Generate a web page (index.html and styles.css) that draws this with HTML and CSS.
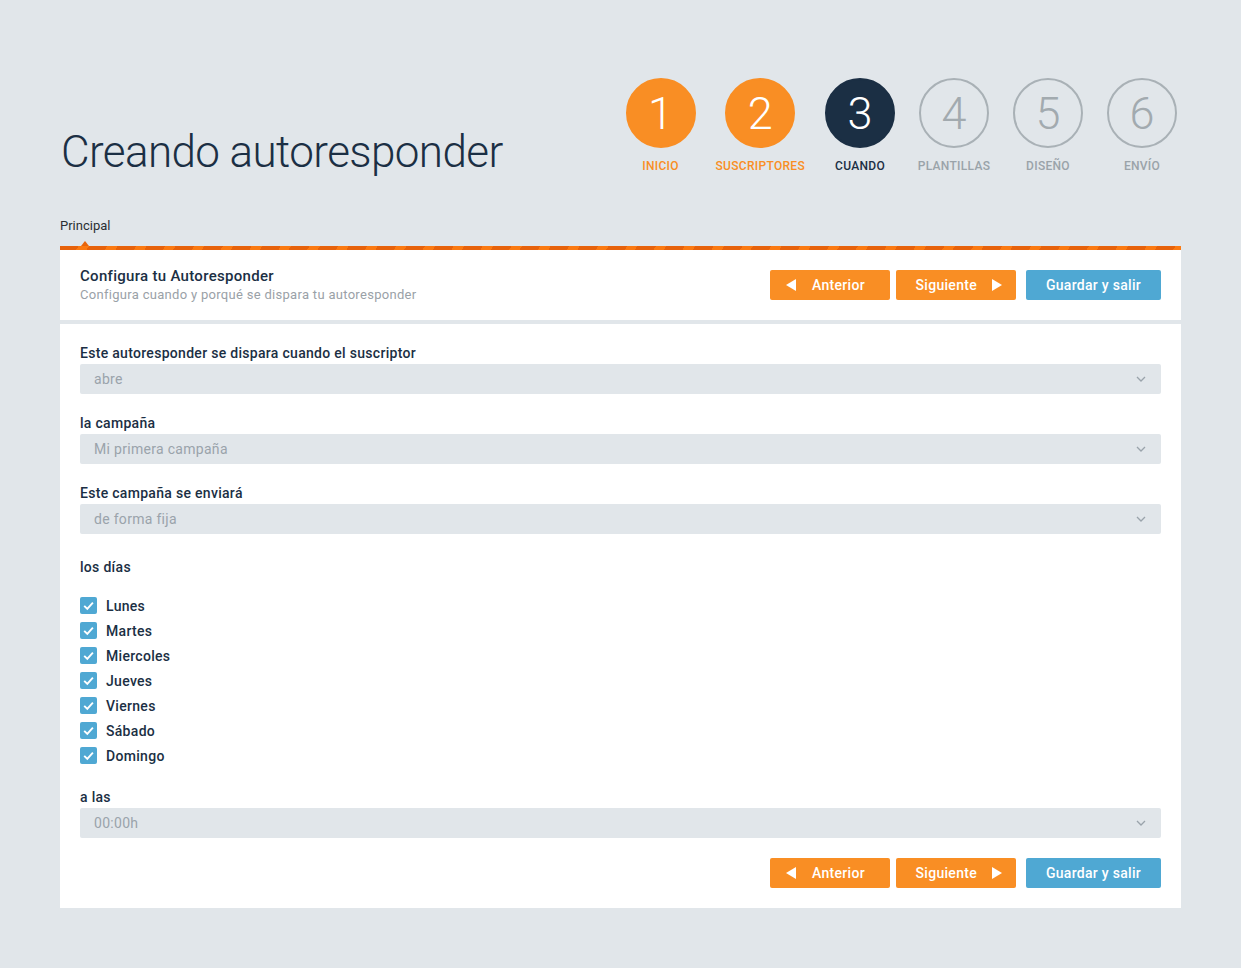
FILE: index.html
```html
<!DOCTYPE html>
<html lang="es">
<head>
<meta charset="utf-8">
<title>Creando autoresponder</title>
<link rel="stylesheet" href="styles.css">
</head>
<body>
  <div class="page">
    <div class="top">
      <h1 class="title">Creando autoresponder</h1>
      <ol class="steps">
        <li class="step done"><span class="num">1</span><span class="name">Inicio</span></li>
        <li class="step done"><span class="num">2</span><span class="name">Suscriptores</span></li>
        <li class="step current"><span class="num">3</span><span class="name">Cuando</span></li>
        <li class="step"><span class="num">4</span><span class="name">Plantillas</span></li>
        <li class="step"><span class="num">5</span><span class="name">Diseño</span></li>
        <li class="step"><span class="num">6</span><span class="name">Envío</span></li>
      </ol>
    </div>

    <div class="tabs">
      <span class="tab active">Principal</span>
    </div>

    <div class="panel">
      <div class="stripe"></div>
      <div class="panel-head">
        <div>
          <h2 class="panel-title">Configura tu Autoresponder</h2>
          <p class="panel-sub">Configura cuando y porqué se dispara tu autoresponder</p>
        </div>
        <div class="actions">
          <button class="btn btn-orange prev"><svg class="tri" viewBox="0 0 10 12"><path d="M10 0V12L0 6Z"/></svg>Anterior</button>
          <button class="btn btn-orange next">Siguiente<svg class="tri" viewBox="0 0 10 12"><path d="M0 0V12L10 6Z"/></svg></button>
          <button class="btn btn-blue save">Guardar y salir</button>
        </div>
      </div>

      <div class="panel-body">
        <div class="field">
          <label class="label">Este autoresponder se dispara cuando el suscriptor</label>
          <div class="select"><span>abre</span><svg class="chev" viewBox="0 0 10 6"><path d="M1 1L5 5L9 1"/></svg></div>
        </div>
        <div class="field">
          <label class="label">la campaña</label>
          <div class="select"><span>Mi primera campaña</span><svg class="chev" viewBox="0 0 10 6"><path d="M1 1L5 5L9 1"/></svg></div>
        </div>
        <div class="field">
          <label class="label">Este campaña se enviará</label>
          <div class="select"><span>de forma fija</span><svg class="chev" viewBox="0 0 10 6"><path d="M1 1L5 5L9 1"/></svg></div>
        </div>

        <div class="days">
          <span class="label">los días</span>
          <ul class="day-list">
            <li class="day"><span class="check"><svg viewBox="0 0 17 17"><path d="M4.2 8.8L7.3 11.9L12.9 5.6"/></svg></span>Lunes</li>
            <li class="day"><span class="check"><svg viewBox="0 0 17 17"><path d="M4.2 8.8L7.3 11.9L12.9 5.6"/></svg></span>Martes</li>
            <li class="day"><span class="check"><svg viewBox="0 0 17 17"><path d="M4.2 8.8L7.3 11.9L12.9 5.6"/></svg></span>Miercoles</li>
            <li class="day"><span class="check"><svg viewBox="0 0 17 17"><path d="M4.2 8.8L7.3 11.9L12.9 5.6"/></svg></span>Jueves</li>
            <li class="day"><span class="check"><svg viewBox="0 0 17 17"><path d="M4.2 8.8L7.3 11.9L12.9 5.6"/></svg></span>Viernes</li>
            <li class="day"><span class="check"><svg viewBox="0 0 17 17"><path d="M4.2 8.8L7.3 11.9L12.9 5.6"/></svg></span>Sábado</li>
            <li class="day"><span class="check"><svg viewBox="0 0 17 17"><path d="M4.2 8.8L7.3 11.9L12.9 5.6"/></svg></span>Domingo</li>
          </ul>
        </div>

        <div class="field">
          <label class="label">a las</label>
          <div class="select"><span>00:00h</span><svg class="chev" viewBox="0 0 10 6"><path d="M1 1L5 5L9 1"/></svg></div>
        </div>

        <div class="actions bottom">
          <button class="btn btn-orange prev"><svg class="tri" viewBox="0 0 10 12"><path d="M10 0V12L0 6Z"/></svg>Anterior</button>
          <button class="btn btn-orange next">Siguiente<svg class="tri" viewBox="0 0 10 12"><path d="M0 0V12L10 6Z"/></svg></button>
          <button class="btn btn-blue save">Guardar y salir</button>
        </div>
      </div>
    </div>
  </div>
</body>
</html>
```

FILE: styles.css
```css
body {
    margin: 0;
    background-color: #e1e6ea;
    font-family: Roboto, "Liberation Sans", sans-serif;
    color: #1b2f44;
    letter-spacing: 0.3px;
}

.page {
    padding: 78px 60px 60px;
}

/* header: title + wizard steps */
.top {
    display: flex;
    justify-content: space-between;
    align-items: flex-start;
}

.title {
    margin: 47px 0 -10px 1px;
    font-size: 44px;
    font-weight: 300;
    line-height: 54px;
    letter-spacing: -0.6px;
}

.steps {
    display: flex;
    margin: 0 -8px 0 0;
    padding: 0;
    list-style: none;
}

.step {
    display: flex;
    flex-direction: column;
    align-items: center;
    min-width: 94px;
    padding: 0 8px;
    box-sizing: border-box;
    color: #9aa3a9;
}

.num {
    box-sizing: border-box;
    width: 70px;
    height: 70px;
    border-radius: 50%;
    border: 2px solid #a9b1b6;
    display: flex;
    justify-content: center;
    align-items: center;
    font-size: 45px;
    font-weight: 300;
    letter-spacing: 0;
    color: #a2aaaf;
}

.name {
    margin-top: 11px;
    font-size: 12px;
    line-height: 14px;
    font-weight: 500;
    text-transform: uppercase;
}

.step.done .num {
    background-color: #f98e24;
    border-color: #f98e24;
    color: #fff;
}

.step.done .name {
    color: #f98e24;
}

.step.current .num {
    background-color: #1b2f44;
    border-color: #1b2f44;
    color: #fff;
}

.step.current .name {
    color: #1b2f44;
}

/* tabs */
.tabs {
    margin-top: 45px;
    display: flex;
}

.tab {
    position: relative;
    font-size: 13px;
    line-height: 16px;
    letter-spacing: 0;
    padding-bottom: 12px;
    color: #2a2f33;
}

.tab.active::after {
    content: "";
    position: absolute;
    left: 50%;
    bottom: 0;
    margin-left: -4px;
    border-left: 4px solid transparent;
    border-right: 4px solid transparent;
    border-bottom: 5px solid #e8650c;
}

/* panel */
.panel {
    width: 1121px;
}

.stripe {
    height: 4px;
    background: repeating-linear-gradient(120deg, #e7620b 0 16px, #fb7a12 16px 25px);
}

.panel-head {
    background-color: #fff;
    padding: 17px 20px;
    display: flex;
    justify-content: space-between;
    align-items: center;
}

.panel-title {
    margin: 0;
    font-size: 15px;
    line-height: 18px;
    font-weight: 500;
}

.panel-sub {
    margin: 2px 0 0;
    font-size: 13px;
    line-height: 16px;
    color: #9aa1a7;
}

.actions {
    display: flex;
}

.actions.bottom {
    justify-content: flex-end;
    margin-top: 20px;
}

.btn {
    height: 30px;
    border: none;
    border-radius: 2px;
    font-family: inherit;
    font-size: 14px;
    font-weight: 500;
    letter-spacing: 0.3px;
    color: #fff;
    display: flex;
    align-items: center;
    justify-content: center;
    gap: 16px;
    padding: 0;
    cursor: pointer;
}

.btn-orange {
    width: 120px;
    background-color: #f98e24;
    margin-right: 6px;
}

.btn.prev {
    justify-content: flex-start;
    padding-left: 16px;
}

.btn.next {
    justify-content: flex-end;
    padding-right: 14px;
    gap: 15px;
}

.btn-blue {
    width: 135px;
    background-color: #4fa8d3;
}

.save {
    margin-left: 4px;
}

.tri {
    width: 10px;
    height: 12px;
    fill: #fff;
}

.panel-body {
    background-color: #fff;
    margin-top: 4px;
    padding: 20px;
}

.field {
    margin-bottom: 20px;
}

.label {
    display: block;
    font-size: 14px;
    line-height: 18px;
    font-weight: 500;
    color: #1b2f44;
    margin-bottom: 2px;
}

.select {
    height: 30px;
    background-color: #e1e6ea;
    border-radius: 2px;
    display: flex;
    align-items: center;
    justify-content: space-between;
    padding: 0 14px;
    font-size: 14px;
    color: #9aa3ab;
}

.chev {
    width: 10px;
    height: 6px;
    margin-right: 1px;
    fill: none;
    stroke: #9aa3ab;
    stroke-width: 1.3;
}

/* weekdays */
.days {
    padding-top: 4px;
    margin-bottom: 20px;
}

.day-list {
    list-style: none;
    margin: 17px 0 0;
    padding: 0;
}

.day {
    display: flex;
    align-items: center;
    height: 25px;
    font-size: 14px;
    font-weight: 500;
}

.check {
    width: 17px;
    height: 17px;
    border-radius: 2px;
    background-color: #4fa8d3;
    margin-right: 9px;
}

.check svg {
    display: block;
    width: 17px;
    height: 17px;
    fill: none;
    stroke: #fff;
    stroke-width: 1.9;
}
```
